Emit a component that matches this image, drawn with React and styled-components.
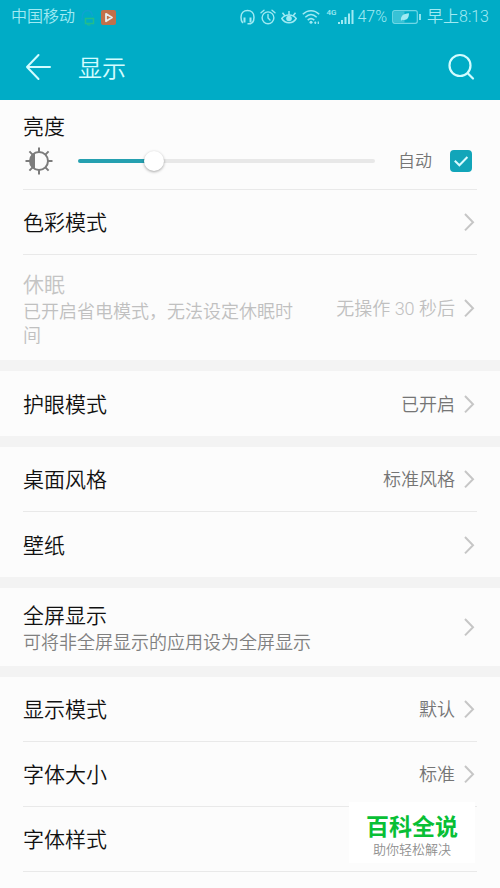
import { useState } from "react";
import styled, { createGlobalStyle } from "styled-components";

const GlobalStyle = createGlobalStyle`
  * {
    box-sizing: border-box;
  }

  body {
    margin: 0;
    background-color: #fcfcfc;
    font-family: Roboto, "Noto Sans CJK SC", sans-serif;
    font-weight: 350;
  }

  button {
    font-family: inherit;
    font-weight: inherit;
  }
`;

const Page = styled.div`
  position: relative;
  min-height: 100vh;
`;

const Header = styled.header`
  background-color: #00acc6;
  color: #d3fcff;
`;

const StatusBar = styled.div`
  display: flex;
  align-items: center;
  justify-content: space-between;
  height: 34px;
  padding: 0 11px;
  color: #a0eaf3;
  font-size: 16px;
  line-height: 24px;
`;

const StatusGroup = styled.div`
  display: flex;
  align-items: center;
  gap: 5px;

  svg {
    display: block;
  }
`;

const Signal = styled.span`
  display: flex;
  align-items: center;
  gap: 2px;
`;

const NetworkType = styled.span`
  align-self: flex-start;
  font-size: 8px;
  font-weight: 500;
  line-height: 16px;
`;

const AppBar = styled.div`
  display: flex;
  align-items: center;
  height: 66px;
  padding: 0 23px;
`;

const IconButton = styled.button`
  display: flex;
  padding: 0;
  border: none;
  background: none;
  color: inherit;
  cursor: pointer;
`;

const Title = styled.h1`
  flex: 1;
  margin: 0 0 0 24px;
  padding-top: 3px;
  font-size: 24px;
  font-weight: 350;
  line-height: 32px;
`;

const Settings = styled.main`
  display: flex;
  flex-direction: column;
  gap: 11px;
  background-color: #f3f3f3;
`;

const Group = styled.section`
  padding: 0 23px;
  background-color: #fcfcfc;
`;

const Row = styled.button`
  display: flex;
  align-items: center;
  gap: 8px;
  width: 100%;
  min-height: 65px;
  padding: ${({ $tall }) => ($tall ? "15px 0 12px" : "13px 0 11px")};
  border: none;
  border-bottom: ${({ $last }) => ($last ? "none" : "1px solid #e9e9e9")};
  background: none;
  color: #111;
  text-align: left;
  cursor: pointer;

  &:disabled {
    color: #c4c4c4;
    cursor: default;
  }
`;

const RowText = styled.span`
  flex: 1;
  display: flex;
  flex-direction: column;
`;

const RowTitle = styled.span`
  font-size: 21px;
  line-height: 30px;
`;

const RowHint = styled.span`
  color: ${({ $muted }) => ($muted ? "#c0c0c0" : "#808080")};
  font-size: 18px;
  line-height: 24px;
`;

const RowValue = styled.span`
  margin-left: 24px;
  color: ${({ $muted }) => ($muted ? "#c0c0c0" : "#757575")};
  font-size: 18px;
  line-height: 24px;
  white-space: nowrap;
`;

const Brightness = styled.div`
  padding: 12px 0 9px;
  border-bottom: 1px solid #e9e9e9;
`;

const BrightnessLabel = styled.label`
  display: block;
  color: #111;
  font-size: 21px;
  line-height: 30px;
`;

const BrightnessControls = styled.div`
  display: flex;
  align-items: center;
  height: 38px;
  padding: 0 5px 0 2px;
`;

const Slider = styled.input`
  appearance: none;
  flex: 1;
  min-width: 0;
  height: 20px;
  margin: 0 23px 0 25px;
  background: none;
  cursor: pointer;

  &::-webkit-slider-runnable-track {
    height: 4px;
    border-radius: 2px;
    background: linear-gradient(
      to right,
      #25a0b0 var(--level),
      #e8e8e8 var(--level)
    );
  }

  &::-webkit-slider-thumb {
    appearance: none;
    width: 20px;
    height: 20px;
    margin-top: -8px;
    border-radius: 50%;
    background-color: #fff;
    box-shadow: 0 1px 3px rgba(0, 0, 0, 0.35);
  }
`;

const AutoLabel = styled.label`
  display: flex;
  align-items: center;
  gap: 18px;
  color: #757575;
  font-size: 17px;
  line-height: 24px;
  cursor: pointer;
`;

const CheckboxBox = styled.span`
  display: grid;

  > * {
    grid-area: 1 / 1;
  }

  svg {
    pointer-events: none;
  }
`;

const Checkbox = styled.input`
  appearance: none;
  width: 22px;
  height: 22px;
  margin: 0;
  border: 2px solid #9b9b9b;
  border-radius: 4px;

  &:checked {
    border-color: #12a5b9;
    background-color: #12a5b9;
  }
`;

const Badge = styled.aside`
  position: absolute;
  right: 25px;
  bottom: 25px;
  display: flex;
  flex-direction: column;
  align-items: center;
  padding: 12px 17px 5px;
  background-color: #fff;
`;

const BadgeName = styled.strong`
  color: #08bf35;
  font-size: 23px;
  font-weight: 700;
  line-height: 28px;
`;

const BadgeText = styled.span`
  color: #8f8f8f;
  font-size: 13px;
  line-height: 16px;
`;

function Chevron() {
  return (
    <svg width="14" height="20" viewBox="0 0 14 20" fill="none" stroke="#c6c6c6" strokeWidth="2">
      <path d="M2 1 10 9.200 2 17.400" />
    </svg>
  );
}

function BackIcon() {
  return (
    <svg width="31" height="30" viewBox="0 0 31 30" fill="none" stroke="currentColor" strokeWidth="2" strokeLinecap="round" strokeLinejoin="round">
      <path d="M15.500 3 4 15 15.500 27M4 15H27" />
    </svg>
  );
}

function SearchIcon() {
  return (
    <svg width="30" height="30" viewBox="0 0 30 30" fill="none" stroke="currentColor" strokeWidth="2.200" strokeLinecap="round">
      <circle cx="13" cy="13.500" r="10.500" />
      <path d="M20.700 21.200 26 26.500" />
    </svg>
  );
}

function BrightnessIcon() {
  return (
    <svg width="28" height="28" viewBox="0 0 28 28" fill="none" stroke="#7c7c7c" strokeWidth="2">
      <circle cx="14" cy="14" r="9" />
      <path d="M10 6A9 9 0 0 0 10 22Z" fill="#7c7c7c" stroke="none" />
      <path d="M14 5V.5M14 23v4.500M5 14H.5M23 14h4.500M7.600 7.600 4.400 4.400M20.400 7.600l3.200-3.200M7.600 20.400l-3.200 3.200M20.400 20.400l3.200 3.200" />
    </svg>
  );
}

function CheckIcon() {
  return (
    <svg width="22" height="22" viewBox="0 0 22 22" fill="none" stroke="#d9fbff" strokeWidth="2">
      <path d="M4.800 10.800 9.400 15.300 17.400 7" />
    </svg>
  );
}

function LockIcon() {
  return (
    <svg width="16" height="18" viewBox="0 0 16 18" fill="none">
      <path d="M2 12.500C2 5 4 2.500 7.500 2.500S12 5 12.500 8" stroke="#0fa3d2" strokeWidth="1.300" />
      <rect x="5.500" y="10.500" width="8" height="5" stroke="#22bd8c" strokeWidth="1.500" />
      <path d="M7.500 15.500v1.500h3" stroke="#22bd8c" />
    </svg>
  );
}

function PlayerIcon() {
  return (
    <svg width="15" height="15" viewBox="0 0 15 15">
      <rect width="15" height="15" rx="2" fill="#c1704a" />
      <path d="M5 3.800 11 7.500 5 11.200Z" fill="none" stroke="#e6eeee" strokeWidth="1.800" strokeLinejoin="round" />
    </svg>
  );
}

function HeadsetIcon() {
  return (
    <svg width="15" height="16" viewBox="0 0 15 16" fill="none" stroke="currentColor" strokeWidth="1.500">
      <path d="M3.200 13.500H2.500C1.300 12 1 10 1 8.200 1 4.300 3.700 1.500 7.500 1.500S14 4.300 14 8.200C14 10 13.700 12 12.500 13.500L10.500 14.800H7.500" />
      <path d="M4.500 8.500v5M10.500 8.500v5" strokeWidth="2" />
    </svg>
  );
}

function AlarmIcon() {
  return (
    <svg width="16" height="16" viewBox="0 0 16 16" fill="none" stroke="currentColor" strokeWidth="1.400" strokeLinecap="round">
      <circle cx="8" cy="8.800" r="5.900" />
      <path d="M8 5.500V9l2 2M1 3.800 4 1.300M15 3.800 12 1.300" />
    </svg>
  );
}

function EyeIcon() {
  return (
    <svg width="16" height="16" viewBox="0 0 16 16" fill="none" stroke="currentColor" strokeWidth="1.500">
      <path d="M.8 9.500C4.200 4.800 11.800 4.800 15.200 9.500 11.800 15.200 4.200 15.200.8 9.500Z" />
      <circle cx="8" cy="9.500" r="2.800" fill="currentColor" stroke="none" />
      <path d="M8 6V2M3.800 6.800 1.500 3.800M12.200 6.800 14.500 3.800" />
    </svg>
  );
}

function WifiIcon() {
  return (
    <svg width="19" height="16" viewBox="0 0 19 16" fill="none" stroke="currentColor" strokeWidth="1.500">
      <path d="M.8 5.300C5.500.5 12.500.5 17.200 5.300M3.300 8.300C7 4.700 11 4.700 14.700 8.300M5.700 11.100C7.800 9.200 10.200 9.200 12.300 11.100" />
      <circle cx="9" cy="13.300" r="1.500" fill="currentColor" stroke="none" />
      <path d="M12.300 13.600h2M13.300 12.400v2.500M16.300 12.400v2.500" strokeWidth="1.200" />
    </svg>
  );
}

function BarsIcon() {
  return (
    <svg width="17" height="16" viewBox="0 0 17 16" fill="currentColor">
      <rect x="0" y="13" width="2" height="2" />
      <rect x="3" y="11" width="2" height="4" />
      <rect x="6.500" y="8" width="2" height="7" />
      <rect x="10" y="4.500" width="2" height="10.500" />
      <rect x="13.500" y="1" width="2" height="14" />
    </svg>
  );
}

function BatteryIcon() {
  return (
    <svg width="30" height="14" viewBox="0 0 30 14" fill="none" stroke="currentColor">
      <rect x="1.500" y="1.500" width="11" height="11" fill="currentColor" fillOpacity="0.350" stroke="none" />
      <rect x=".7" y=".7" width="24.600" height="12.600" rx="2" strokeWidth="1.200" strokeOpacity="0.700" />
      <path d="M28 4v6" strokeWidth="1.800" />
      <path d="M9 10.800C8.500 6 11 3.700 17 3.300 17 8.500 14.500 10.800 10.500 9.800Z" fill="currentColor" stroke="none" />
    </svg>
  );
}

function SettingRow({ title, hint, value, disabled, last }) {
  return (
    <Row type="button" disabled={disabled} $last={last} $tall={disabled}>
      <RowText>
        <RowTitle>{title}</RowTitle>
        {hint && <RowHint $muted={disabled}>{hint}</RowHint>}
      </RowText>
      {value && <RowValue $muted={disabled}>{value}</RowValue>}
      <Chevron />
    </Row>
  );
}

export default function App() {
  const [level, setLevel] = useState(24);
  const [auto, setAuto] = useState(true);

  return (
    <Page>
      <GlobalStyle />
      <Header>
        <StatusBar>
          <StatusGroup>
            <span>中国移动</span>
            <LockIcon />
            <PlayerIcon />
          </StatusGroup>
          <StatusGroup>
            <HeadsetIcon />
            <AlarmIcon />
            <EyeIcon />
            <WifiIcon />
            <Signal>
              <NetworkType>4G</NetworkType>
              <BarsIcon />
              <span>47%</span>
            </Signal>
            <BatteryIcon />
            <span>早上8:13</span>
          </StatusGroup>
        </StatusBar>
        <AppBar>
          <IconButton type="button" aria-label="返回">
            <BackIcon />
          </IconButton>
          <Title>显示</Title>
          <IconButton type="button" aria-label="搜索">
            <SearchIcon />
          </IconButton>
        </AppBar>
      </Header>

      <Settings>
        <Group>
          <Brightness>
            <BrightnessLabel htmlFor="brightness">亮度</BrightnessLabel>
            <BrightnessControls>
              <BrightnessIcon />
              <Slider
                id="brightness"
                type="range"
                min="0"
                max="100"
                value={level}
                style={{ "--level": `${level}%` }}
                onChange={(event) => setLevel(Number(event.target.value))}
              />
              <AutoLabel>
                自动
                <CheckboxBox>
                  <Checkbox
                    type="checkbox"
                    checked={auto}
                    onChange={(event) => setAuto(event.target.checked)}
                  />
                  {auto && <CheckIcon />}
                </CheckboxBox>
              </AutoLabel>
            </BrightnessControls>
          </Brightness>
          <SettingRow title="色彩模式" />
          <SettingRow
            title="休眠"
            hint="已开启省电模式，无法设定休眠时间"
            value="无操作 30 秒后"
            disabled
            last
          />
        </Group>
        <Group>
          <SettingRow title="护眼模式" value="已开启" last />
        </Group>
        <Group>
          <SettingRow title="桌面风格" value="标准风格" />
          <SettingRow title="壁纸" last />
        </Group>
        <Group>
          <SettingRow title="全屏显示" hint="可将非全屏显示的应用设为全屏显示" last />
        </Group>
        <Group>
          <SettingRow title="显示模式" value="默认" />
          <SettingRow title="字体大小" value="标准" />
          <SettingRow title="字体样式" />
        </Group>
      </Settings>

      <Badge>
        <BadgeName>百科全说</BadgeName>
        <BadgeText>助你轻松解决</BadgeText>
      </Badge>
    </Page>
  );
}
